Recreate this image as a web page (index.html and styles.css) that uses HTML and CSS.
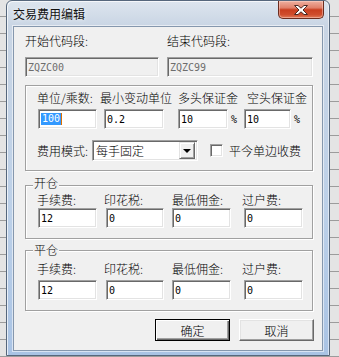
FILE: index.html
```html
<!DOCTYPE html>
<html lang="zh-CN">
<head>
    <meta charset="UTF-8">
    <title>交易费用编辑</title>
    <link rel="stylesheet" href="styles.css">
</head>
<body>
    <div class="screen">
        <div class="window">
            <div class="titlebar">
                <span class="title">交易费用编辑</span>
                <button class="close-btn" title="关闭">
                    <svg width="14" height="10" viewBox="0 0 14 10">
                        <path d="M0.5 0.5 H4 L7 3.2 L10 0.5 H13.5 L9 5 L13.5 9.5 H10 L7 6.8 L4 9.5 H0.5 L5 5 Z" fill="#fff" stroke="#4a2a24" stroke-width="1" stroke-linejoin="round"/>
                    </svg>
                </button>
            </div>

            <div class="client">
                <!-- 代码段 -->
                <div class="code-row">
                    <div class="code-field code-start">
                        <label class="lbl">开始代码段:</label>
                        <input class="box" type="text" value="ZQZC00" disabled>
                    </div>
                    <div class="code-field code-end">
                        <label class="lbl">结束代码段:</label>
                        <input class="box" type="text" value="ZQZC99" disabled>
                    </div>
                </div>

                <!-- 单位 / 保证金 -->
                <div class="group group-main">
                    <div class="unit-labels">
                        <span class="lbl unit-a">单位/乘数:</span>
                        <span class="lbl unit-b">最小变动单位</span>
                        <span class="lbl unit-c">多头保证金</span>
                        <span class="lbl unit-d">空头保证金</span>
                    </div>
                    <div class="unit-inputs">
                        <div class="box box-focus unit-a"><span class="sel">100</span><span class="caret"></span></div>
                        <input class="box unit-b" type="text" value="0.2">
                        <input class="box unit-c" type="text" value="10">
                        <span class="pct">%</span>
                        <input class="box unit-d" type="text" value="10">
                        <span class="pct">%</span>
                    </div>
                    <div class="mode-row">
                        <span class="lbl">费用模式:</span>
                        <div class="combo">
                            <span class="combo-text">每手固定</span>
                            <span class="combo-btn"><i class="arrow"></i></span>
                        </div>
                        <label class="check">
                            <span class="check-box"></span>
                            <span class="lbl">平今单边收费</span>
                        </label>
                    </div>
                </div>

                <!-- 开仓 -->
                <div class="group group-open">
                    <span class="legend">开仓</span>
                    <div class="fee-row">
                        <div class="fee-col col-1"><span class="lbl">手续费:</span><input class="box" type="text" value="12"></div>
                        <div class="fee-col col-2"><span class="lbl">印花税:</span><input class="box" type="text" value="0"></div>
                        <div class="fee-col col-3"><span class="lbl">最低佣金:</span><input class="box" type="text" value="0"></div>
                        <div class="fee-col col-4"><span class="lbl">过户费:</span><input class="box" type="text" value="0"></div>
                    </div>
                </div>

                <!-- 平仓 -->
                <div class="group group-close">
                    <span class="legend">平仓</span>
                    <div class="fee-row">
                        <div class="fee-col col-1"><span class="lbl">手续费:</span><input class="box" type="text" value="12"></div>
                        <div class="fee-col col-2"><span class="lbl">印花税:</span><input class="box" type="text" value="0"></div>
                        <div class="fee-col col-3"><span class="lbl">最低佣金:</span><input class="box" type="text" value="0"></div>
                        <div class="fee-col col-4"><span class="lbl">过户费:</span><input class="box" type="text" value="0"></div>
                    </div>
                </div>

                <div class="buttons">
                    <button class="btn btn-default">确定</button>
                    <button class="btn">取消</button>
                </div>
            </div>
        </div>
    </div>
</body>
</html>
```

FILE: styles.css
```css
* {
    margin: 0;
    padding: 0;
    box-sizing: border-box;
}

body {
    font-family: "Noto Sans CJK SC", "Noto Sans", sans-serif;
    font-size: 12px;
    font-weight: 300;
    color: #000;
}

.screen {
    width: 339px;
    height: 357px;
    overflow: hidden;
    display: flex;
    padding-left: 6px;
    background-color: #e4e4e4;
    background-image: repeating-linear-gradient(180deg, transparent 0, transparent 16px, #9c9c9c 16px, #9c9c9c 17px);
}

/* window frame */
.window {
    width: 324px;
    height: 356px;
    border: 1px solid #56677c;
    border-radius: 6px 6px 0 0;
    padding: 0 6px 4px 6px;
    background: linear-gradient(180deg, #dde5ee 0, #c9d5e4 25px, #bcd0e8 60%, #a9c3e4 100%);
    box-shadow: inset 1px 1px 0 rgba(255, 255, 255, 0.7), inset -1px 0 0 rgba(255, 255, 255, 0.5);
    display: flex;
    flex-direction: column;
}

.titlebar {
    height: 25px;
    display: flex;
    align-items: flex-start;
    justify-content: space-between;
}

.title {
    line-height: 25px;
    font-size: 12px;
    font-weight: 400;
    color: #111;
    text-shadow: 0 0 4px rgba(255, 255, 255, 0.9);
}

.close-btn {
    width: 46px;
    height: 18px;
    margin-right: -1px;
    border: 1px solid #6b2c1f;
    border-top: none;
    border-radius: 0 0 5px 5px;
    background: linear-gradient(180deg, #eeb0a0 0%, #e0806a 40%, #c93e1f 52%, #cf4d2d 80%, #e07a58 100%);
    box-shadow: inset 0 0 0 1px rgba(255, 220, 210, 0.45);
    display: flex;
    align-items: center;
    justify-content: center;
    cursor: pointer;
}

.close-btn svg {
    display: block;
}

/* client area */
.client {
    height: 325px;
    border: 1px solid #8597ad;
    background: #f0f0f0;
    padding: 7px 9px 0 11px;
    box-shadow: 0 0 0 1px rgba(255, 255, 255, 0.55);
}

.lbl {
    display: block;
    font-size: 12px;
    line-height: 14px;
    white-space: nowrap;
}

/* classic sunken edit box */
.box {
    display: block;
    height: 20px;
    border: 1px solid;
    border-color: #a0a0a0 #fff #fff #a0a0a0;
    box-shadow: inset 1px 1px 0 #696969, inset -1px -1px 0 #e3e3e3;
    background: #fff;
    padding: 0 2px;
    font-family: "DejaVu Sans Mono", "Liberation Mono", monospace;
    font-size: 10px;
    font-weight: 400;
    color: #000;
    outline: none;
}

.box:disabled {
    background: #f0f0f0;
    color: #6d6d6d;
}

.box-focus {
    display: flex;
    align-items: center;
    padding-left: 2px;
}

.sel {
    background: #3399ff;
    color: #fff;
    line-height: 12px;
    padding: 0 1px;
}

.caret {
    width: 1px;
    height: 12px;
    background: #e07000;
}

.code-row {
    display: flex;
    gap: 8px;
}

.code-start {
    width: 134px;
}

.code-end {
    width: 146px;
}

.code-field .lbl {
    margin-bottom: 9px;
}

.code-field .box {
    width: 100%;
}

/* etched group box */
.group {
    border: 1px solid #a0a0a0;
    box-shadow: inset 1px 1px 0 #fff, 1px 1px 0 #fff;
    padding-left: 11px;
}

.group-main {
    margin-top: 8px;
    height: 86px;
    padding-top: 5px;
}

.unit-labels {
    display: flex;
}

.unit-labels .unit-a { width: 63px; }
.unit-labels .unit-b { width: 78px; }
.unit-labels .unit-c { width: 69px; }

.unit-inputs {
    display: flex;
    align-items: center;
    margin-top: 4px;
}

.unit-inputs .unit-a {
    width: 59px;
    margin-left: 1px;
}

.unit-inputs .unit-b {
    width: 60px;
    margin-left: 7px;
}

.unit-inputs .unit-c {
    width: 50px;
    margin-left: 14px;
}

.unit-inputs .unit-d {
    width: 47px;
    margin-left: 7px;
}

.pct {
    font-family: "DejaVu Sans Mono", monospace;
    font-size: 10px;
    font-weight: 400;
    margin-left: 3px;
}

.mode-row {
    display: flex;
    align-items: center;
    margin-top: 11px;
    height: 21px;
}

.combo {
    width: 106px;
    height: 21px;
    margin-left: 4px;
    border: 1px solid;
    border-color: #a0a0a0 #fff #fff #a0a0a0;
    box-shadow: inset 1px 1px 0 #696969, inset -1px -1px 0 #e3e3e3;
    background: #fff;
    display: flex;
    align-items: center;
    justify-content: space-between;
    padding: 2px 2px 2px 3px;
}

.combo-text {
    font-size: 12px;
    line-height: 14px;
}

.combo-btn {
    width: 16px;
    height: 17px;
    background: #f0f0f0;
    border: 1px solid;
    border-color: #e3e3e3 #696969 #696969 #e3e3e3;
    box-shadow: inset 1px 1px 0 #fff, inset -1px -1px 0 #a0a0a0;
    display: flex;
    align-items: center;
    justify-content: center;
}

.arrow {
    width: 0;
    height: 0;
    border-left: 4px solid transparent;
    border-right: 4px solid transparent;
    border-top: 4px solid #000;
}

.check {
    display: flex;
    align-items: center;
    margin-left: 12px;
    gap: 6px;
}

.check-box {
    width: 13px;
    height: 13px;
    border: 1px solid;
    border-color: #a0a0a0 #fff #fff #a0a0a0;
    box-shadow: inset 1px 1px 0 #696969, inset -1px -1px 0 #e3e3e3;
    background: #fff;
}

/* 开仓 / 平仓 */
.legend {
    display: block;
    width: max-content;
    height: 12px;
    margin: -7px 0 0 -4px;
    padding: 0 1px;
    background: #f0f0f0;
    line-height: 12px;
    font-size: 12px;
}

.group-open {
    margin-top: 14px;
    height: 54px;
}

.group-open .legend {
    margin-top: -9px;
}

.group-close {
    margin-top: 11px;
    height: 61px;
}

.fee-row {
    display: flex;
}

.group-open .fee-row {
    margin-top: 4px;
}

.group-close .fee-row {
    margin-top: 6px;
}

.group-open .fee-col .box {
    margin-top: 1px;
}

.group-close .fee-col .box {
    margin-top: 4px;
}

.fee-col .box {
    width: 59px;
}

.col-1 { width: 67px; }
.col-2 { width: 68px; }
.col-3 { width: 70px; }

.col-1 .box { margin-left: 1px; }
.col-2 .box { margin-left: 2px; width: 58px; }
.col-4 .box { margin-left: 2px; }

/* buttons */
.buttons {
    display: flex;
    justify-content: flex-end;
    gap: 9px;
    margin-top: 8px;
    margin-right: -1px;
}

.btn {
    width: 75px;
    height: 22px;
    font-family: "Noto Sans CJK SC", sans-serif;
    font-size: 12px;
    font-weight: 300;
    background: #f0f0f0;
    border: 1px solid;
    border-color: #fff #696969 #696969 #fff;
    box-shadow: inset -1px -1px 0 #a0a0a0, inset 1px 1px 0 #e3e3e3;
    cursor: pointer;
}

.btn-default {
    border-color: #000;
    box-shadow: inset 1px 1px 0 #fff, inset -1px -1px 0 #696969, inset -2px -2px 0 #a0a0a0;
}
```
